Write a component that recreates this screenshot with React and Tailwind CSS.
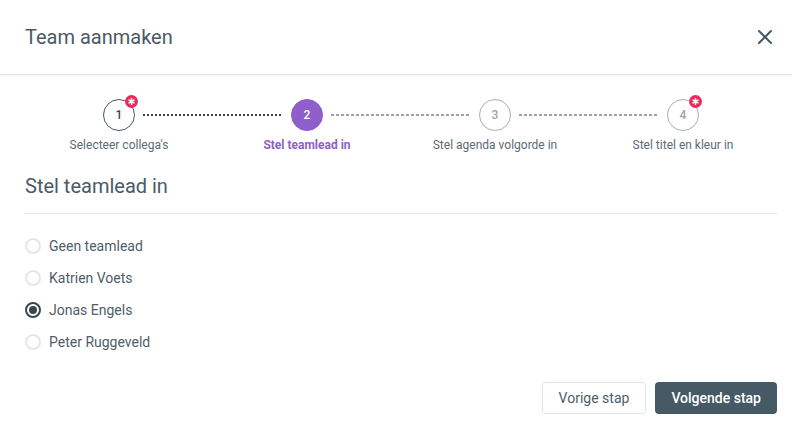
import { useState } from "react";

const steps = [
  { n: 1, label: "Selecteer collega's", state: "done", required: true },
  { n: 2, label: "Stel teamlead in", state: "active" },
  { n: 3, label: "Stel agenda volgorde in", state: "todo" },
  { n: 4, label: "Stel titel en kleur in", state: "todo", required: true },
];

const people = ["Geen teamlead", "Katrien Voets", "Jonas Engels", "Peter Ruggeveld"];

const Badge = () => (
  <span className="absolute -top-[5px] -right-[4px] w-[13px] h-[13px] rounded-full bg-[#f0285c] flex items-center justify-center">
    <svg width="7" height="7" viewBox="0 0 10 10">
      <g stroke="white" strokeWidth="2.2" strokeLinecap="round">
        <line x1="5" y1="1" x2="5" y2="9" />
        <line x1="1.5" y1="3" x2="8.5" y2="7" />
        <line x1="1.5" y1="7" x2="8.5" y2="3" />
      </g>
    </svg>
  </span>
);

const StepCircle = ({ step }) => {
  const cls =
    step.state === "active"
      ? "bg-[#8e5fcb] text-white border-[#8e5fcb]"
      : step.state === "done"
      ? "bg-white text-[#37474f] border-[#455a64]"
      : "bg-white text-[#9aa3a9] border-[#a7b0b5]";
  return (
    <div className={`relative w-8 h-8 rounded-full border flex items-center justify-center text-[12px] font-medium ${cls}`}>
      {step.n}
      {step.required && <Badge />}
    </div>
  );
};

const Line = ({ dark }) => (
  <div
    className={
      dark
        ? "mx-2 flex-1 h-[2px] bg-[repeating-linear-gradient(to_right,#37474f_0_2px,transparent_2px_4px)]"
        : "mx-2 flex-1 h-[2px] bg-[repeating-linear-gradient(to_right,#9aa3a9_0_3px,transparent_3px_5px)]"
    }
  />
);

export default function App() {
  const [lead, setLead] = useState("Jonas Engels");

  return (
    <div className="w-[792px] h-[433px] bg-white font-['Roboto',sans-serif] text-[#455a64]">
      <header className="h-[75px] flex items-center justify-between pl-[25px] pr-[15px] border-b border-[#e3e6e8] shadow-[0_1px_2px_rgba(0,0,0,0.06)]">
        <h1 className="text-[20px] text-[#4a5a66] pb-[1px]">Team aanmaken</h1>
        <button className="p-1 text-[#455a64]">
          <svg width="16" height="16" viewBox="0 0 16 16">
            <g stroke="currentColor" strokeWidth="2" strokeLinecap="round">
              <line x1="2" y1="2" x2="14" y2="14" />
              <line x1="14" y1="2" x2="2" y2="14" />
            </g>
          </svg>
        </button>
      </header>

      <div className="pl-[25px] pr-[15px]">
        <div className="pt-[24px] flex items-center px-[78px]">
          <StepCircle step={steps[0]} />
          <Line dark />
          <StepCircle step={steps[1]} />
          <Line />
          <StepCircle step={steps[2]} />
          <Line />
          <StepCircle step={steps[3]} />
        </div>
        <div className="grid grid-cols-4 mt-[6px] text-[12px] leading-4 text-center">
          {steps.map((s) => (
            <div
              key={s.n}
              className={s.state === "active" ? "text-[#8e5fcb] font-bold" : "text-[#5b6b76]"}
            >
              {s.label}
            </div>
          ))}
        </div>

        <h2 className="mt-[19px] text-[20px] leading-7 text-[#4a5a66] pb-[13px] border-b border-[#e3e6e8]">
          Stel teamlead in
        </h2>

        <div className="pt-[16px] flex flex-col">
          {people.map((p) => {
            const checked = lead === p;
            return (
              <label
                key={p}
                onClick={() => setLead(p)}
                className="h-8 flex items-center gap-2 text-[14px] text-[#4e5e69] cursor-pointer"
              >
                <span
                  className={`w-4 h-4 rounded-full border-2 flex items-center justify-center ${
                    checked ? "border-[#37474f]" : "border-[#e4e7e9]"
                  }`}
                >
                  {checked && <span className="w-2 h-2 rounded-full bg-[#37474f]" />}
                </span>
                {p}
              </label>
            );
          })}
        </div>

        <div className="mt-[24px] flex justify-end gap-[9px]">
          <button className="h-8 px-4 rounded border border-[#e0e4e6] text-[14px] text-[#4e5e69] bg-white">
            Vorige stap
          </button>
          <button className="h-8 px-4 rounded bg-[#455a64] text-[14px] font-medium text-white">
            Volgende stap
          </button>
        </div>
      </div>
    </div>
  );
}
